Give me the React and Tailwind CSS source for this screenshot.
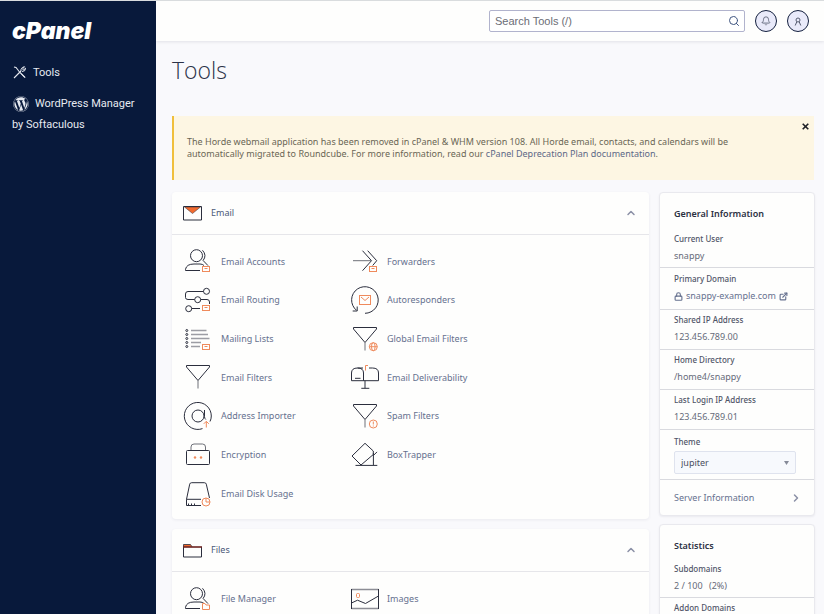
import React from "react";
import { FaWordpress } from "react-icons/fa";
import { Bell, ChevronRight, ChevronUp, ExternalLink, Lock, Search } from "lucide-react";

const INK = "#2b2e3d";
const ORANGE = "#ef8a5c";

function Glyph({ children }) {
  return (
    <svg
      width="28"
      height="28"
      viewBox="0 0 28 28"
      fill="none"
      stroke={INK}
      strokeWidth="1"
      className="shrink-0 overflow-visible"
      aria-hidden="true"
    >
      {children}
    </svg>
  );
}

function MailBadge({ x = 18.5 }) {
  return (
    <g stroke={ORANGE} transform={`translate(${x} 19.5)`}>
      <rect width="7" height="5" />
      <path d="M2 2h3" />
    </g>
  );
}

function Person() {
  return (
    <>
      <circle cx="12.5" cy="8.7" r="6" />
      <path d="M18.500 3.300q4.600 5 .6 10.200L24 18.600M16 23.500H1.500v-1.200q1-5.300 8.500-5.300h6q2.500 0 4 1.500" />
    </>
  );
}

function Funnel({ x = 0 }) {
  return (
    <g transform={`translate(${x} 0)`}>
      <path d="M2.500 2.500h23v1.500L14 17.500 2.500 4z" strokeLinejoin="round" />
      <path d="M14 17.500v8" stroke="#6e7078" />
    </g>
  );
}

const glyphs = {
  accounts: (
    <>
      <Person />
      <MailBadge />
    </>
  ),
  routing: (
    <>
      <circle cx="22.5" cy="5.3" r="3" />
      <circle cx="13.7" cy="13.7" r="3" />
      <circle cx="4.7" cy="22.7" r="3" />
      <path d="M19.500 5.500H4Q1.500 5.500 1.500 8v3.500q0 2 2.500 2h6.700M16.700 13.500h6.300q2.500 0 2.500 2.500v2M7.700 22.500H16" />
      <MailBadge />
    </>
  ),
  lists: (
    <>
      <path d="M7 5.500h15.500M7 9.500h17M7 13.500h18.500M7 17.500h10M7 21.500h9" stroke="#9c9da4" strokeWidth="1.500" />
      {[5.5, 9.5, 13.5, 17.5, 21.5].map((y) => (
        <circle key={y} cx="2.8" cy={y} r="1" />
      ))}
      <MailBadge />
    </>
  ),
  filter: <Funnel />,
  globalFilter: (
    <>
      <Funnel x={1} />
      <g stroke={ORANGE}>
        <circle cx="23.3" cy="21.7" r="4" />
        <ellipse cx="23.3" cy="21.7" rx="1.800" ry="4" />
        <path d="M19.300 21.700h8" />
      </g>
    </>
  ),
  spam: (
    <>
      <Funnel x={1} />
      <g stroke={ORANGE}>
        <circle cx="23.3" cy="22" r="4" />
        <path d="M23.300 19.500v3M23.300 23.500v1" />
      </g>
    </>
  ),
  importer: (
    <>
      <path d="M18.500 26.600A13.500 13.500 0 1 1 27.300 14q0 3-1.300 5.500M20.500 8v6.500q0 2 1.300 3" />
      <circle cx="14" cy="14" r="6" />
      <path d="M22.300 25.500v-6M19.800 21.800l2.500-2.500 2.500 2.500" stroke={ORANGE} />
    </>
  ),
  encryption: (
    <>
      <path d="M7 9.500V6q0-3 3-3h8.500q3 0 3 3v3.500" stroke="#6e7078" />
      <rect x="2.500" y="9.500" width="23" height="14" rx="1" />
      <circle cx="11" cy="16.500" r="1.200" fill={ORANGE} stroke="none" />
      <circle cx="17" cy="16.500" r="1.200" fill={ORANGE} stroke="none" />
    </>
  ),
  disk: (
    <>
      <path d="M17 25.500H2.500v-6.200L5.700 4.200q.3-1.500 2-1.500h12.600q1.700 0 2 1.500l3.200 13.800M2.500 19.300H17M4.500 25.500v-2M7.500 25.500v-2M10.500 25.500v-2" />
      <g stroke={ORANGE}>
        <circle cx="22" cy="22" r="4" />
        <path d="M22 18v4h4" />
      </g>
    </>
  ),
  forward: (
    <>
      <path d="M3 13.700h18" stroke="#6e7078" />
      <path d="M12.500 3.700l9 10-9 10M17.700 3.700l9 10-4 4.800" />
      <MailBadge x={19.5} />
    </>
  ),
  auto: (
    <>
      <path d="M15 27.300A13.300 13.300 0 1 0 6.500 24.300M2.700 25h4.500v-4.500" />
      <g stroke={ORANGE}>
        <rect x="9.500" y="9.500" width="11" height="9" />
        <path d="M11 11l4 3.500L19 11" />
      </g>
    </>
  ),
  mailbox: (
    <>
      <path d="M1.500 17.700V10q0-5 6-5t6 5v7.700M7.500 5H13M19 5h3.500q6 0 6 5v7.700h-27M5 15.300h5.500M15 17.700v7.600M11.300 25.300h8" />
      <path d="M15.500 7.500v-5H18" stroke={ORANGE} />
    </>
  ),
  trapper: (
    <>
      <path d="M15 2.300L23.300 10v3.500L11 24 2 15zM5.500 24.400h21.800M23.400 12v12M23.400 14.500l3.600-3.600" strokeLinejoin="round" />
    </>
  ),
  fileManager: (
    <>
      <Person />
      <path d="M18.500 24.500v-6h2.500l1 1.500h3.500v4.500z" stroke={ORANGE} />
    </>
  ),
  images: (
    <>
      <path d="M1.500 4.500h27M1.500 23.500h27" stroke="#8c8d95" strokeWidth="1.500" />
      <path d="M1.500 4v20M28.500 4v20M1.500 18l6-2.800 8 3.300 13-7.500" />
      <rect x="6.500" y="8.500" width="3" height="4" rx="1" stroke={ORANGE} />
    </>
  ),
};

const emailTools = [
  ["Email Accounts", "accounts"],
  ["Forwarders", "forward"],
  ["Email Routing", "routing"],
  ["Autoresponders", "auto"],
  ["Mailing Lists", "lists"],
  ["Global Email Filters", "globalFilter"],
  ["Email Filters", "filter"],
  ["Email Deliverability", "mailbox"],
  ["Address Importer", "importer"],
  ["Spam Filters", "spam"],
  ["Encryption", "encryption"],
  ["BoxTrapper", "trapper"],
  ["Email Disk Usage", "disk"],
];

const fileTools = [
  ["File Manager", "fileManager"],
  ["Images", "images"],
];

function ToolLink({ name, glyph }) {
  return (
    <a href="#" className="flex items-center gap-[9px] whitespace-nowrap text-[#66718f]">
      <Glyph>{glyphs[glyph]}</Glyph>
      {name}
    </a>
  );
}

function ToolGroup({ title, icon, tools, rowsClass }) {
  return (
    <section className="rounded-sm bg-[#fefefd] shadow-[0_1px_3px_rgba(60,60,90,0.08)]">
      <header className="flex h-[43px] items-center border-b border-[#e6e6ea] pr-3 pl-[11px]">
        {icon}
        <h2 className="ml-[9px] grow text-[#4a5878]">{title}</h2>
        <button type="button" aria-label={`Collapse ${title}`} className="text-[#8b90a6]">
          <ChevronUp size={12} strokeWidth={3} />
        </button>
      </header>
      <div className={`grid grid-cols-[166px_166px] pt-[7px] pb-[6px] pl-3 ${rowsClass}`}>
        {tools.map(([name, glyph]) => (
          <ToolLink key={name} name={name} glyph={glyph} />
        ))}
      </div>
    </section>
  );
}

function InfoRow({ label, children, className = "py-1" }) {
  return (
    <div className={`border-b border-[#d9dadf] px-[14px] ${className}`}>
      <dt className="text-[8px] leading-3 font-medium text-[#505568]">{label}</dt>
      {children && <dd className="mt-[3px] leading-4 whitespace-nowrap text-[#666b7a]">{children}</dd>}
    </div>
  );
}

function SideCard({ title, children }) {
  return (
    <section className="rounded-sm border border-[#e9e9ee] bg-[#fefefd] shadow-[0_1px_2px_rgba(60,60,90,0.08)]">
      <h2 className="px-[14px] pt-[13px] pb-[7px] leading-4 font-semibold text-[#2b3042]">{title}</h2>
      {children}
    </section>
  );
}

export default function App() {
  return (
    <div className="flex h-screen overflow-hidden border-t border-[#d9dcde] bg-[#f9f9fc] font-['Noto_Sans','Open_Sans',sans-serif] text-[9px]">
      <aside className="w-[156px] shrink-0 bg-[#08193b] px-3 pt-4 font-[Roboto,sans-serif] text-[11px] text-[#e6e9f0]">
        <div className="font-[Inter,sans-serif] text-[23px] leading-7 font-black text-white italic">cPanel</div>
        <nav className="mt-[17px] leading-[21px]">
          <a href="#" className="flex items-center gap-[7px]">
            <svg width="13" height="13" viewBox="0 0 13 13" fill="none" stroke="currentColor" className="ml-px" aria-hidden="true">
              <path d="M1 1l2 .5 2 2.500 1.500 2L12 11.500M1 12l5-5 2-2" strokeWidth="1.100" />
              <path d="M8 5q-.5-3.500 3.500-4.300L9.500 3l1 1 2.200-1.800Q12.500 5.500 9 5.500M8 7.500l4 4" strokeWidth="1" />
            </svg>
            Tools
          </a>
          <a href="#" className="mt-[10px] block">
            <FaWordpress className="mr-[6px] ml-px inline-block align-middle" size={16} />
            WordPress Manager by Softaculous
          </a>
        </nav>
      </aside>

      <div className="flex min-w-0 grow flex-col">
        <header className="flex h-10 shrink-0 items-center justify-end gap-[10px] bg-[#fefefd] pr-[15px] shadow-[0_1px_3px_rgba(60,60,80,0.12)]">
          <label className="flex h-[22px] w-64 items-center rounded-xs border border-[#b1b3cd] bg-white pr-1 pl-[5px]">
            <input
              type="search"
              aria-label="Search Tools"
              placeholder="Search Tools (/)"
              className="min-w-0 grow font-['Liberation_Sans',sans-serif] text-[11px] outline-none placeholder:text-[#6b6d76]"
            />
            <Search size={12} strokeWidth={2} className="text-[#3f5580]" />
          </label>
          <button type="button" aria-label="Notifications" className="grid size-[22px] place-items-center rounded-full border border-[#14203f] bg-[#e9eafa] text-[#555b70]">
            <Bell size={10} strokeWidth={2} />
          </button>
          <button type="button" aria-label="Account" className="grid size-[22px] place-items-center rounded-full border border-[#14203f] bg-[#e9eafa] text-[#555b70]">
            <svg width="8" height="9" viewBox="0 0 8 9" fill="none" stroke="currentColor" aria-hidden="true">
              <circle cx="4" cy="3" r="2" />
              <path d="M2.800 4.800L1.200 8.500M5.200 4.800L6.800 8.500" />
            </svg>
          </button>
        </header>

        <main className="pr-[9px] pl-4">
          <h1 className="mt-[11px] font-['Open_Sans',sans-serif] text-[23px] leading-9 font-light text-[#2c3348]">Tools</h1>

          <div role="alert" className="mt-7 mr-px flex h-16 items-start border-l-2 border-[#f0bf3c] bg-[#fdf6e3] pl-[13px]">
            <p className="grow pt-5 leading-3 text-[#6a6655]">
              The Horde webmail application has been removed in cPanel &amp; WHM version 108. All Horde email, contacts, and calendars will be automatically migrated to Roundcube. For more information, read our{" "}
              <a href="#" className="text-[#5c6886]">cPanel Deprecation Plan documentation</a>.
            </p>
            <button type="button" aria-label="Dismiss" className="mt-[7px] mr-[5px] ml-12 text-[#1d1f26]">
              <svg width="7" height="7" viewBox="0 0 7 7" stroke="currentColor" strokeWidth="1.600" aria-hidden="true">
                <path d="M.7.700l5.600 5.600M6.300.700L.7 6.300" />
              </svg>
            </button>
          </div>

          <div className="mt-3 flex items-start gap-[10px]">
            <div className="flex min-w-0 grow flex-col gap-[10px]">
              <ToolGroup
                title="Email"
                tools={emailTools}
                rowsClass="h-[284px] auto-rows-fr"
                icon={
                  <svg width="19" height="15" viewBox="0 0 19 15" aria-hidden="true">
                    <path d="M.500.500h18v13.500H.500z" fill="none" stroke={INK} />
                    <path d="M1.500 1h16L9.500 7.500z" fill="#f26a2e" stroke={INK} strokeWidth=".500" />
                  </svg>
                }
              />
              <ToolGroup
                title="Files"
                tools={fileTools}
                rowsClass="auto-rows-[39px]"
                icon={
                  <svg width="19" height="15" viewBox="0 0 19 15" aria-hidden="true">
                    <path d="M.500 4V1.500h7l1.500 2.300" fill="#f26a2e" stroke={INK} strokeWidth=".800" />
                    <path d="M.500 4v10h18V4" fill="none" stroke={INK} />
                    <path d="M0 4h19" stroke="#6b2320" strokeWidth="1.600" />
                  </svg>
                }
              />
            </div>

            <aside className="flex w-[156px] shrink-0 flex-col gap-2">
              <SideCard title="General Information">
                <dl>
                  <InfoRow label="Current User" className="pt-1 pb-[3px]">snappy</InfoRow>
                  <InfoRow label="Primary Domain" className="py-[5px]">
                    <a href="#" className="flex items-center gap-[3px] text-[#66718f]">
                      <Lock size={9} strokeWidth={3} />
                      snappy-example.com
                      <ExternalLink size={9} strokeWidth={3} />
                    </a>
                  </InfoRow>
                  <InfoRow label="Shared IP Address">123.456.789.00</InfoRow>
                  <InfoRow label="Home Directory">/home4/snappy</InfoRow>
                  <InfoRow label="Last Login IP Address">123.456.789.01</InfoRow>
                </dl>
                <div className="border-b border-[#d9dadf] px-[14px] pt-[6px] pb-[5px]">
                  <label htmlFor="theme" className="block text-[8px] leading-3 font-medium text-[#505568]">Theme</label>
                  <div className="relative mt-[3px] w-[122px]">
                    <select id="theme" className="h-[23px] w-full appearance-none rounded-xs border border-[#dfe3ee] bg-[#f7f9fd] pl-[6px] text-[9px] text-[#4a4f60]">
                      <option>jupiter</option>
                    </select>
                    <svg width="5" height="4" viewBox="0 0 5 4" fill="#858a98" className="pointer-events-none absolute top-[10px] right-[7px]" aria-hidden="true">
                      <path d="M0 0h5L2.500 4z" />
                    </svg>
                  </div>
                </div>
                <a href="#" className="flex h-[35px] items-center justify-between pr-3 pl-[14px] text-[#66718f]">
                  Server Information
                  <ChevronRight size={12} strokeWidth={3} className="text-[#8b90a6]" />
                </a>
              </SideCard>

              <SideCard title="Statistics">
                <dl>
                  <InfoRow label="Subdomains" className="pt-[2px] pb-[3px]">
                    2 / 100 <span className="ml-1">(2%)</span>
                  </InfoRow>
                  <InfoRow label="Addon Domains" />
                </dl>
              </SideCard>
            </aside>
          </div>
        </main>
      </div>
    </div>
  );
}
